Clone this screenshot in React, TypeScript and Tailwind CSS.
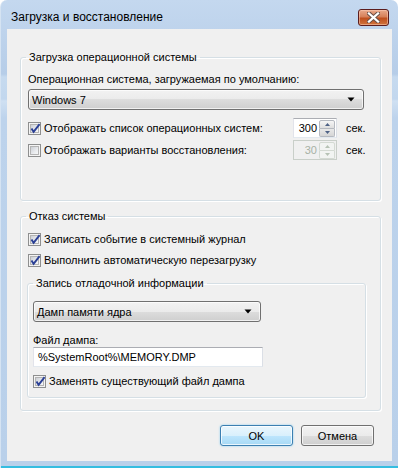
import React from "react";

const F = { fontFamily: '"Liberation Sans", Arial, sans-serif' };

function Check({ checked, disabled }: { checked?: boolean; disabled?: boolean }) {
  return (
    <div
      className={
        "w-[13px] h-[13px] shrink-0 border " +
        (disabled ? "border-[#bcbcbc] bg-[#f4f4f4]" : "border-[#8e8f8f] bg-[#f4f4f4]")
      }
    >
      <div
        className={
          "m-[1px] w-[9px] h-[9px] border relative " +
          (disabled
            ? "border-[#d8d8d8] bg-[#e6e6e6]"
            : "border-[#b4b4b4] bg-[linear-gradient(135deg,#cbcfd5_0%,#e9ebee_60%,#f6f7f8_100%)]")
        }
      >
        {checked && (
          <svg className="absolute left-[-1px] top-[-2px]" width="11" height="11" viewBox="0 0 11 11">
            <path d="M1.5 5.5 L3.6 8.8 L9.6 1.2" fill="none" stroke="#2a3f95" strokeWidth="1.9" strokeLinejoin="miter" />
          </svg>
        )}
      </div>
    </div>
  );
}

function CheckRow({ label, checked, disabled, className = "" }: { label: string; checked?: boolean; disabled?: boolean; className?: string }) {
  return (
    <div className={"flex items-center h-[16px] shrink-0 " + className}>
      <Check checked={checked} disabled={disabled} />
      <span className="ml-[3px] leading-[16px] whitespace-nowrap">{label}</span>
    </div>
  );
}

function Combo({ text, className = "" }: { text: string; className?: string }) {
  return (
    <div
      className={
        "h-[21px] rounded-[3px] border border-[#707070] flex items-center pl-[3px] pr-[8px] bg-[linear-gradient(180deg,#f2f2f2_0%,#ebebeb_50%,#dddddd_50%,#cfcfcf_100%)] shadow-[inset_0_0_0_1px_rgba(255,255,255,0.7)] " +
        className
      }
    >
      <span className="leading-[16px] whitespace-nowrap">{text}</span>
      <svg className="ml-auto" width="8" height="5" viewBox="0 0 8 5">
        <path d="M0.5 0.5 H7.5 L4 4.5 Z" fill="#000" />
      </svg>
    </div>
  );
}

function Spin({ value, disabled }: { value: string; disabled?: boolean }) {
  const arrow = disabled ? "#b6c2b4" : "#4d6185";
  return (
    <div
      className={
        "w-[44px] h-[20px] shrink-0 border flex items-center " +
        (disabled
          ? "border-[#c9cfc9] bg-[#f0f0f0]"
          : "border-t-[#abadb3] border-l-[#e2e3ea] border-r-[#dbdfe6] border-b-[#e3e9ef] bg-white")
      }
    >
      <span className={"w-[23px] text-right leading-[16px] " + (disabled ? "text-[#a7b0a5]" : "text-black")}>{value}</span>
      <div className="ml-auto mr-[1px] flex flex-col w-[16px] h-[17px]">
        <div
          className={
            "h-[9px] border rounded-t-[2px] flex items-center justify-center " +
            (disabled ? "border-[#d4dad3] bg-[#f2f4f2]" : "border-[#b5b9c0] bg-[linear-gradient(180deg,#f6f6f6,#dedede)]")
          }
        >
          <svg width="5" height="3" viewBox="0 0 5 3"><path d="M0 3 L2.5 0 L5 3 Z" fill={arrow} /></svg>
        </div>
        <div
          className={
            "h-[8px] border border-t-0 rounded-b-[2px] flex items-center justify-center " +
            (disabled ? "border-[#d4dad3] bg-[#f2f4f2]" : "border-[#b5b9c0] bg-[linear-gradient(180deg,#e8e8e8,#d6d6d6)]")
          }
        >
          <svg width="5" height="3" viewBox="0 0 5 3"><path d="M0 0 L2.5 3 L5 0 Z" fill={arrow} /></svg>
        </div>
      </div>
    </div>
  );
}

function Legend({ children }: { children: React.ReactNode }) {
  return <legend className="ml-[5px] px-[3px] leading-[16px] whitespace-nowrap">{children}</legend>;
}

export default function App() {
  return (
    <div
      className="w-[398px] h-[468px] flex flex-col rounded-t-[7px] bg-[linear-gradient(180deg,#c4d8ef_0px,#b6cde8_74px,#c6daef_77px,#c2d7ee_99px,#cfe0f2_101px,#bdd3ec_118px,#b9d0ea_100%)] text-[11px] text-black overflow-hidden border-l border-[#d5e3f2]"
      style={F}
    >
      <div className="h-[29px] shrink-0 flex items-start">
        <span className="mt-[9px] ml-[10px] leading-[16px] text-[12px]">Загрузка и восстановление</span>
        <div className="ml-auto mt-[9px] mr-[9px] w-[31px] h-[17px] rounded-[3px] border border-[#5b1d1d] bg-[linear-gradient(180deg,#e9a98c_0%,#d6805a_45%,#bf4f1f_55%,#d0743c_100%)] shadow-[inset_0_0_0_1px_rgba(255,210,190,0.5)] flex items-center justify-center">
          <svg width="13" height="11" viewBox="0 0 13 11">
            <path d="M2 1.5 L11 9.5 M11 1.5 L2 9.5" stroke="#6a5048" strokeWidth="4.2" strokeLinecap="square" />
            <path d="M2 1.5 L11 9.5 M11 1.5 L2 9.5" stroke="#ffffff" strokeWidth="2.3" strokeLinecap="square" />
          </svg>
        </div>
      </div>

      <div className="mx-[6px] h-[432px] bg-[#f0f0f0] pt-[20px] pl-[13px] pr-[11px] flex flex-col">
        <fieldset className="border border-[#d5dfe5] rounded-[3px] shadow-[inset_1px_1px_0_#fff,1px_1px_0_#fff]">
          <Legend>Загрузка операционной системы</Legend>
          <div className="pt-[6px] pl-[7px] pb-[40px] flex flex-col">
            <div className="leading-[16px] whitespace-nowrap">Операционная система, загружаемая по умолчанию:</div>
            <Combo text="Windows 7" className="mt-[2px] w-[336px]" />
            <div className="mt-[8px] flex items-center h-[20px]">
              <CheckRow label="Отображать список операционных систем:" checked className="w-[265px]" />
              <Spin value="300" />
              <span className="ml-[9px] leading-[16px]">сек.</span>
            </div>
            <div className="mt-[2px] flex items-center h-[20px]">
              <CheckRow label="Отображать варианты восстановления:" className="w-[265px]" />
              <Spin value="30" disabled />
              <span className="ml-[9px] leading-[16px]">сек.</span>
            </div>
          </div>
        </fieldset>

        <fieldset className="mt-[7px] border border-[#d5dfe5] rounded-[3px] shadow-[inset_1px_1px_0_#fff,1px_1px_0_#fff]">
          <Legend>Отказ системы</Legend>
          <div className="pt-[7px] pl-[6px] pb-[12px] flex flex-col">
            <CheckRow label="Записать событие в системный журнал" checked className="ml-[1px]" />
            <CheckRow label="Выполнить автоматическую перезагрузку" checked className="ml-[1px] mt-[5px]" />
            <fieldset className="mt-[7px] w-[339px] border border-[#d5dfe5] rounded-[3px] shadow-[inset_1px_1px_0_#fff,1px_1px_0_#fff]">
              <Legend>Запись отладочной информации</Legend>
              <div className="pt-[10px] pl-[5px] pb-[8px] flex flex-col">
                <Combo text="Дамп памяти ядра" className="w-[228px]" />
                <div className="mt-[11px] leading-[14px] whitespace-nowrap">Файл дампа:</div>
                <div className="w-[230px] h-[20px] border border-t-[#abadb3] border-l-[#e2e3ea] border-r-[#dbdfe6] border-b-[#e3e9ef] bg-white flex items-center pl-[4px]">
                  <span className="leading-[16px]">%SystemRoot%\MEMORY.DMP</span>
                </div>
                <CheckRow label="Заменять существующий файл дампа" checked className="mt-[6px]" />
              </div>
            </fieldset>
          </div>
        </fieldset>

        <div className="mt-[14px] flex justify-end pr-[7px] gap-[8px]">
          <div className="w-[73px] h-[21px] rounded-[3px] border border-[#3c7fb1] bg-[linear-gradient(180deg,#eaf6fd_0%,#d9f0fc_50%,#bee6fd_50%,#a7d9f5_100%)] shadow-[inset_0_0_0_1px_rgba(255,255,255,0.75),0_0_2px_#7fc8ee] flex items-center justify-center leading-[16px]">
            OK
          </div>
          <div className="w-[73px] h-[21px] rounded-[3px] border border-[#707070] bg-[linear-gradient(180deg,#f2f2f2_0%,#ebebeb_50%,#dddddd_50%,#cfcfcf_100%)] shadow-[inset_0_0_0_1px_rgba(255,255,255,0.7)] flex items-center justify-center leading-[16px]">
            Отмена
          </div>
        </div>
      </div>
      <div className="mt-auto h-[2px] bg-[#35bde0]" />
    </div>
  );
}
